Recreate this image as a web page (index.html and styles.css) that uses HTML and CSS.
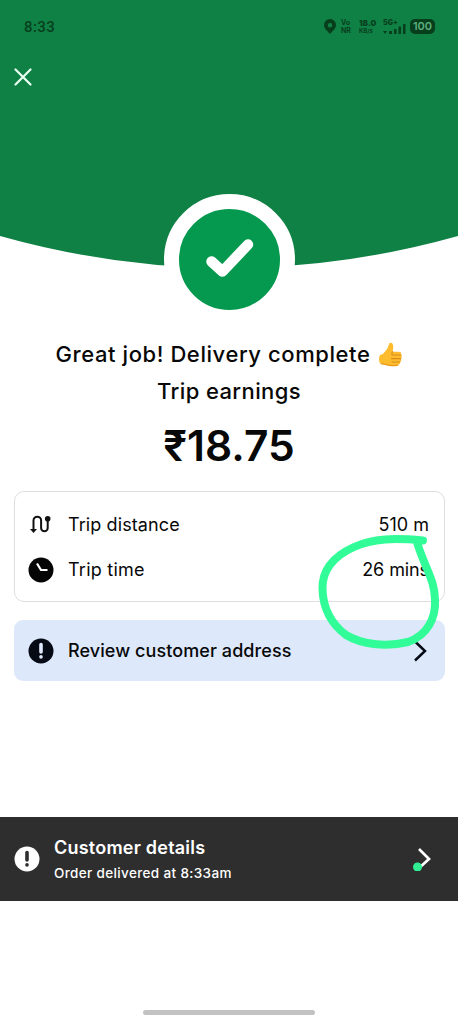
FILE: index.html
```
<!DOCTYPE html>
<html lang="en">
<head>
<meta charset="utf-8">
<meta name="viewport" content="width=device-width, initial-scale=1">
<title>Delivery complete</title>
<link rel="stylesheet" href="styles.css">
</head>
<body>
<main class="screen">
  <header class="hero">
    <svg class="hero-bg" width="458" height="269" viewBox="0 0 458 269" aria-hidden="true"><path d="M0 0H458V236Q344 268 229 268Q114 268 0 236Z" fill="#108145"/></svg>
    <div class="status">
      <time class="clock">8:33</time>
      <div class="indicators">
        <svg class="pin" width="12" height="15" viewBox="0 0 12 15"><path fill-rule="evenodd" d="M6 0a6 6 0 0 0-6 6c0 3.600 3.500 6 6 9 2.500-3 6-5.400 6-9a6 6 0 0 0-6-6Zm0 4a2.200 2.200 0 1 1 0 4.400A2.200 2.200 0 0 1 6 4Z" fill="#073f1d"/></svg>
        <span class="stack net">Vo<br>NR</span>
        <span class="stack rate"><b>18.0</b><small>KB/s</small></span>
        <span class="signal"><b>5G+</b><svg width="23" height="12" viewBox="0 0 23 12" fill="#073f1d"><path d="M0 8l2 3 2-3zM6 8h3v3H6zM11 6h2.500v5H11zM15.500 3.500H18V11h-2.500zM20 1h2.500v10H20z"/></svg></span>
        <span class="battery">100</span>
      </div>
    </div>
    <button class="close" aria-label="Close"><svg width="18" height="18" viewBox="0 0 18 18"><path d="M1.500 1.500l15 15M16.500 1.500l-15 15" stroke="#e9fff2" stroke-width="2.200" stroke-linecap="round"/></svg></button>
    <div class="badge"><svg width="50" height="42" viewBox="0 0 50 42"><path d="M7.500 23.500L18.500 33.500L44 6.500" fill="none" stroke="#fff" stroke-width="10.500" stroke-linecap="round" stroke-linejoin="round"/></svg></div>
  </header>

  <section class="summary">
    <h1 class="title"><span class="title-text">Great job! Delivery complete</span>
      <svg class="thumb" width="23" height="25" viewBox="0 0 24 26" aria-label="thumbs up"><path d="M1 13.500Q5 12.500 7 9Q9.500 6 10.500 2Q11.500-.5 14 1.500Q15.700 4 14.200 10H21q2.700.300 2 3 1.600 2 0 4 1 2.200-1 3.700.500 2.300-2 3.300Q12 25.500 7.500 23.500L1 22.500Q-1 18 1 13.500Z" fill="#fdbb2e"/><path d="M14.200 10q-1.400 1.600-.5 3.500h9M13 17.300h9.700M13.500 20.800h8.300" fill="none" stroke="#d98b16" stroke-width="1.100" stroke-linecap="round"/><path d="M2 22.500l5.500 1q4.500 2 12.500.500" fill="none" stroke="#e99a1b" stroke-width="1.300"/></svg>
    </h1>
    <h2 class="subtitle">Trip earnings</h2>
    <p class="amount">₹18.75</p>
  </section>

  <section class="card">
    <div class="row">
      <svg class="icon" width="26" height="26" viewBox="0 0 26 26"><path d="M5.500 19V8.500a3.800 3.800 0 0 1 7.600 0v7.500a3.300 3.300 0 0 0 6.600 0V7" fill="none" stroke="#111" stroke-width="2"/><path d="M2 17h7l-3.500 4z" fill="#111"/><circle cx="19.700" cy="6.800" r="2.800" fill="#111"/></svg>
      <span class="label distance">Trip distance</span><span class="value meters">510 m</span>
    </div>
    <div class="row">
      <svg class="icon" width="26" height="26" viewBox="0 0 26 26"><circle cx="13" cy="13" r="12.500" fill="#050505"/><path d="M9 6.500l4 6.500h6.500" fill="none" stroke="#fff" stroke-width="2.200"/></svg>
      <span class="label triptime">Trip time</span><span class="value minutes">26 mins</span>
    </div>
  </section>

  <a class="review">
    <svg class="icon" width="26" height="26" viewBox="0 0 26 26"><circle cx="13" cy="13" r="12.500" fill="#050a14"/><path d="M13 6.500v7.500M13 18.800v.200" stroke="#dfe9fb" stroke-width="3.600" stroke-linecap="round"/></svg>
    <span class="review-text">Review customer address</span>
    <svg class="chevron" width="14" height="22" viewBox="0 0 14 22"><path d="M2 1.500L12 11L2 20.500" fill="none" stroke="#050a14" stroke-width="2.500"/></svg>
  </a>

  <a class="details">
    <svg width="26" height="26" viewBox="0 0 26 26"><circle cx="13" cy="13" r="12.500" fill="#fff"/><path d="M13 6.500v7.500M13 18.800v.200" stroke="#2e2e2e" stroke-width="3.600" stroke-linecap="round"/></svg>
    <span class="details-copy"><strong>Customer details</strong><span class="delivered">Order delivered at 8:33am</span></span>
    <svg class="details-arrow" width="20" height="24" viewBox="0 0 20 24"><path d="M7 2L17 12L6 22" fill="none" stroke="#fff" stroke-width="2.700"/><circle cx="5.500" cy="20" r="4.500" fill="#32ee93"/></svg>
  </a>
  <div class="home-bar"></div>

  <svg class="scribble" width="130" height="124" viewBox="0 0 130 124" aria-hidden="true"><path d="M107 10.500C79 8 57 8 38 17C16 27 6 42 6.500 59C7 76 14 93 30 105C45 114 69 117.500 92 112C112 105 120 87 119 70C119 51 110 40 101.500 14" fill="none" stroke="#32fc98" stroke-width="8" stroke-linecap="round" stroke-linejoin="round"/></svg>
</main>
</body>
</html>
```
FILE: styles.css
```
* { box-sizing: border-box; }
body { margin: 0; background: #fff; color: #080808; font-family: Inter, "Noto Sans", sans-serif; }
.screen { position: relative; width: 458px; height: 1024px; overflow: hidden; display: flex; flex-direction: column; }
.hero { position: relative; height: 325px; display: flex; flex-direction: column; flex: none; }
.hero > * { position: relative; }
.hero .hero-bg { position: absolute; top: 0; left: 0; }
.status { height: 53px; padding: 0 23px 0 24px; display: flex; align-items: center; justify-content: space-between; color: #073f1d; }
.clock { font: 500 15px Roboto, sans-serif; letter-spacing: .4px; }
.indicators { display: flex; align-items: center; height: 20px; }
.stack { font: 700 7px/8px Inter, sans-serif; }
.net { width: 11px; margin-left: 5px; }
.rate { width: 17px; margin-left: 7px; display: flex; flex-direction: column; }
.rate b { font-size: 8px; }
.rate small { font-size: 6px; }
.signal { width: 23px; margin-left: 7px; display: flex; flex-direction: column; font: 700 7px/7px Inter, sans-serif; }
.signal svg { margin-top: -3px; }
.battery { width: 25px; height: 15px; margin-left: 4px; border-radius: 5px; background: #073f1d; color: #5cae7d; font: 600 11px/15px Inter, sans-serif; text-align: center; }
.close { width: 18px; height: 18px; margin: 15px 0 0 14px; padding: 0; border: 0; background: none; display: flex; }
.badge { width: 131px; height: 131px; margin: 107.5px auto 0; border: 15px solid #fff; border-radius: 50%; background: #05994f; display: flex; align-items: center; justify-content: center; }
.summary { height: 166px; padding-top: 11px; display: flex; flex-direction: column; align-items: center; flex: none; }
h1, h2, p { margin: 0; }
.title, .subtitle { font-size: 22px; line-height: 37px; font-weight: 500; white-space: nowrap; }
.title { display: flex; align-items: center; gap: 9px; }
.title-text { letter-spacing: .58px; }
.subtitle { letter-spacing: .4px; }
.amount { font-size: 42.500px; line-height: 52px; font-weight: 600; margin-top: 10px; }
.card { width: 431px; height: 111px; margin-left: 14px; padding: 10px 15px 10px 13px; border: 1px solid #dedede; border-radius: 10px; display: flex; flex-direction: column; flex: none; }
.row { height: 45px; display: flex; align-items: center; font-size: 18px; flex: none; }
.label { margin-left: 14px; }
.triptime { letter-spacing: .25px; }
.distance { letter-spacing: .1px; }
.value { margin-left: auto; }
.minutes { letter-spacing: -.1px; }
.review { width: 431px; height: 61px; margin: 18px 0 0 14px; padding: 0 18px 0 14px; border-radius: 9px; background: #dde9fb; display: flex; align-items: center; flex: none; }
.review-text { margin-left: 14px; font-size: 18px; font-weight: 500; letter-spacing: .08px; }
.chevron { margin-left: auto; }
.details { height: 84px; margin-top: 136px; padding: 0 26px 0 14px; background: #2e2e2e; color: #fff; display: flex; align-items: center; flex: none; }
.details-copy { margin-left: 14px; display: flex; flex-direction: column; font-size: 13.500px; line-height: 22px; font-weight: 500; }
.details-copy strong { font-size: 18px; line-height: 28px; font-weight: 600; letter-spacing: .22px; }
.delivered { letter-spacing: .36px; }
.details-arrow { margin-left: auto; }
.home-bar { width: 172px; height: 5px; margin: auto auto 9px; border-radius: 3px; background: #c2c2c2; }
.scribble { position: absolute; left: 316px; top: 530px; }
```
